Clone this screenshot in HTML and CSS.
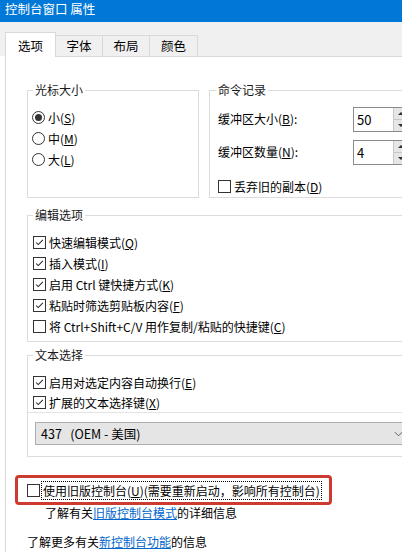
FILE: index.html
```html
<!DOCTYPE html>
<html lang="zh-CN">
<head>
  <meta charset="UTF-8">
  <title>控制台窗口 属性</title>
  <link rel="stylesheet" href="styles.css">
</head>
<body>
  <div class="window">
    <div class="titlebar">控制台窗口 属性</div>

    <div class="tabs">
      <div class="tab active">选项</div>
      <div class="tab">字体</div>
      <div class="tab">布局</div>
      <div class="tab last">颜色</div>
    </div>

    <div class="panel">
      <div class="row">
        <fieldset class="group cursor">
          <legend>光标大小</legend>
          <div class="opt"><span class="radio on"></span><span>小(<u>S</u>)</span></div>
          <div class="opt"><span class="radio"></span><span>中(<u>M</u>)</span></div>
          <div class="opt"><span class="radio"></span><span>大(<u>L</u>)</span></div>
        </fieldset>

        <fieldset class="group history">
          <legend>命令记录</legend>
          <div class="field">
            <span class="field-label">缓冲区大小(<u>B</u>):</span>
            <div class="spin"><span class="spin-val">50</span><span class="spin-btns"><i class="up"></i><i class="down"></i></span></div>
          </div>
          <div class="field second">
            <span class="field-label">缓冲区数量(<u>N</u>):</span>
            <div class="spin"><span class="spin-val">4</span><span class="spin-btns"><i class="up"></i><i class="down"></i></span></div>
          </div>
          <div class="opt discard"><span class="check"></span><span>丢弃旧的副本(<u>D</u>)</span></div>
        </fieldset>
      </div>

      <fieldset class="group edit">
        <legend>编辑选项</legend>
        <div class="opt"><span class="check"><svg viewBox="0 0 13 13"><polyline points="2.5,6.5 5,9 10.5,3.5"/></svg></span><span>快速编辑模式(<u>Q</u>)</span></div>
        <div class="opt"><span class="check"><svg viewBox="0 0 13 13"><polyline points="2.5,6.5 5,9 10.5,3.5"/></svg></span><span>插入模式(<u>I</u>)</span></div>
        <div class="opt"><span class="check"><svg viewBox="0 0 13 13"><polyline points="2.5,6.5 5,9 10.5,3.5"/></svg></span><span>启用 Ctrl 键快捷方式(<u>K</u>)</span></div>
        <div class="opt"><span class="check"><svg viewBox="0 0 13 13"><polyline points="2.5,6.5 5,9 10.5,3.5"/></svg></span><span>粘贴时筛选剪贴板内容(<u>F</u>)</span></div>
        <div class="opt"><span class="check"></span><span>将 Ctrl+Shift+C/V 用作复制/粘贴的快捷键(<u>C</u>)</span></div>
      </fieldset>

      <fieldset class="group select">
        <legend>文本选择</legend>
        <div class="opt"><span class="check"><svg viewBox="0 0 13 13"><polyline points="2.5,6.5 5,9 10.5,3.5"/></svg></span><span>启用对选定内容自动换行(<u>E</u>)</span></div>
        <div class="opt"><span class="check"><svg viewBox="0 0 13 13"><polyline points="2.5,6.5 5,9 10.5,3.5"/></svg></span><span>扩展的文本选择键(<u>X</u>)</span></div>
        <div class="splice"></div>
        <div class="dropdown">
          <span>437&nbsp;&nbsp;&nbsp;(OEM - 美国)</span>
          <svg class="chev" viewBox="0 0 10 6"><polyline points="1,1 5,5 9,1"/></svg>
        </div>
      </fieldset>

      <div class="legacy">
        <span class="check"></span>
        <span class="focus">使用旧版控制台(<u>U</u>)(需要重新启动，影响所有控制台)</span>
      </div>
      <p class="info indent">了解有关<a href="#">旧版控制台模式</a>的详细信息</p>
      <p class="info more">了解更多有关<a href="#">新控制台功能</a>的信息</p>
    </div>
  </div>
</body>
</html>
```

FILE: styles.css
```css
html, body {
  margin: 0;
  padding: 0;
  width: 402px;
  height: 552px;
  overflow: hidden;
  background: #fff;
}

.window {
  font-family: "Noto Sans CJK SC", "Noto Sans", sans-serif;
  font-size: 12px;
  color: #000;
  width: 402px;
  height: 552px;
  overflow: hidden;
}

u {
  text-decoration: underline;
  text-underline-offset: 1px;
}

.titlebar {
  height: 22px;
  background: #0078d7;
  color: #fff;
  line-height: 17px;
  padding-left: 5px;
  font-size: 12.5px;
}

.tabs {
  height: 34px;
  background: #f0f0f0;
  display: flex;
  align-items: flex-end;
  padding-left: 5px;
}

.tab {
  width: 46px;
  height: 20px;
  line-height: 20px;
  text-align: center;
  border: 1px solid #d9d9d9;
  border-bottom: none;
  border-left: none;
  background: #f0f0f0;
  font-size: 12.5px;
}

.tab.active {
  width: 49px;
  height: 24px;
  line-height: 25px;
  border-left: 1px solid #d9d9d9;
  background: #fff;
  margin-bottom: -1px;
  position: relative;
  z-index: 1;
}

.tab.last {
  width: 47px;
}

.panel {
  background: #fff;
  border-top: 1px solid #d9d9d9;
  border-left: 1px solid #d9d9d9;
  margin-left: 5px;
  padding: 25px 0 0 21px;
  width: 420px;
  height: 470px;
}

.row {
  display: flex;
  gap: 10px;
}

.group {
  margin: 0;
  border: 1px solid #dcdcdc;
  padding: 9px 0 0 5px;
  min-inline-size: 0;
}

.group legend {
  padding: 0 2px;
  line-height: 16px;
  color: #1a1a1a;
}

.cursor {
  width: 172px;
  box-sizing: border-box;
}

.history {
  width: 220px;
  box-sizing: border-box;
  padding: 9px 0 1px 8px;
}

.history legend {
  margin-left: -2px;
}

.opt {
  display: flex;
  align-items: center;
  gap: 3px;
  height: 21px;
  white-space: nowrap;
}

.radio {
  width: 11px;
  height: 11px;
  border: 1px solid #333;
  border-radius: 50%;
  display: flex;
  align-items: center;
  justify-content: center;
  margin-left: -1px;
}

.radio.on::after {
  content: "";
  width: 7px;
  height: 7px;
  border-radius: 50%;
  background: #333;
}

.check {
  width: 11px;
  height: 11px;
  border: 1px solid #333;
  background: #fff;
  flex: none;
  display: flex;
}

.check svg {
  width: 11px;
  height: 11px;
  fill: none;
  stroke: #222;
  stroke-width: 1.2;
}

.field {
  display: flex;
  align-items: center;
  height: 25px;
}

.field.second {
  margin-top: 8px;
}

.field-label {
  width: 135px;
  margin-top: -3px;
}

.spin {
  display: flex;
  width: 60px;
  height: 23px;
  border: 1px solid #8a8a8a;
}

.spin-val {
  width: 36px;
  padding-left: 3px;
  line-height: 23px;
  font-size: 13px;
}

.spin-btns {
  display: flex;
  flex-direction: column;
  width: 14px;
  background: #e6e6e6;
  border-left: 1px solid #c8c8c8;
}

.spin-btns i {
  flex: 1;
  display: flex;
  align-items: center;
  justify-content: center;
}

.spin-btns i.up {
  border-bottom: 1px solid #c8c8c8;
}

.spin-btns i::after {
  content: "";
  border-left: 3px solid transparent;
  border-right: 3px solid transparent;
}

.spin-btns i.up::after {
  border-bottom: 3px solid #333;
}

.spin-btns i.down::after {
  border-top: 3px solid #333;
}

.discard {
  margin-top: 11px;
  height: 20px;
}

.edit {
  margin-top: 9px;
  padding: 9px 0 4px 5px;
  width: 420px;
}

.select {
  margin-top: 5px;
  padding: 9px 0 11px 5px;
  width: 420px;
}

.select .opt {
  height: 20px;
}

.splice {
  border-top: 1px solid #e4e4e4;
  margin-left: -5px;
}

.dropdown {
  margin: 9px 0 0 2px;
  height: 21px;
  border: 1px solid #adadad;
  background: #e5e5e5;
  display: flex;
  align-items: center;
  justify-content: space-between;
  padding: 0 6px 0 5px;
  width: 362px;
  font-size: 12.5px;
}

.chev {
  width: 9px;
  height: 6px;
  fill: none;
  stroke: #555;
  stroke-width: 1;
}

.legacy {
  margin: 18px 0 0 -12px;
  width: 302px;
  height: 24px;
  border: 3px solid #cc3a30;
  border-radius: 4px;
  display: flex;
  align-items: center;
  padding-left: 9px;
  gap: 2px;
}

.focus {
  outline: 1px dotted #000;
  line-height: 17px;
  padding: 0 1px;
  white-space: nowrap;
}

.info {
  margin: 0;
  line-height: 16px;
  white-space: nowrap;
}

.info a {
  color: #0066cc;
  text-decoration: underline;
}

.indent {
  margin-left: 18px;
}

.more {
  margin-top: 13px;
}
```
